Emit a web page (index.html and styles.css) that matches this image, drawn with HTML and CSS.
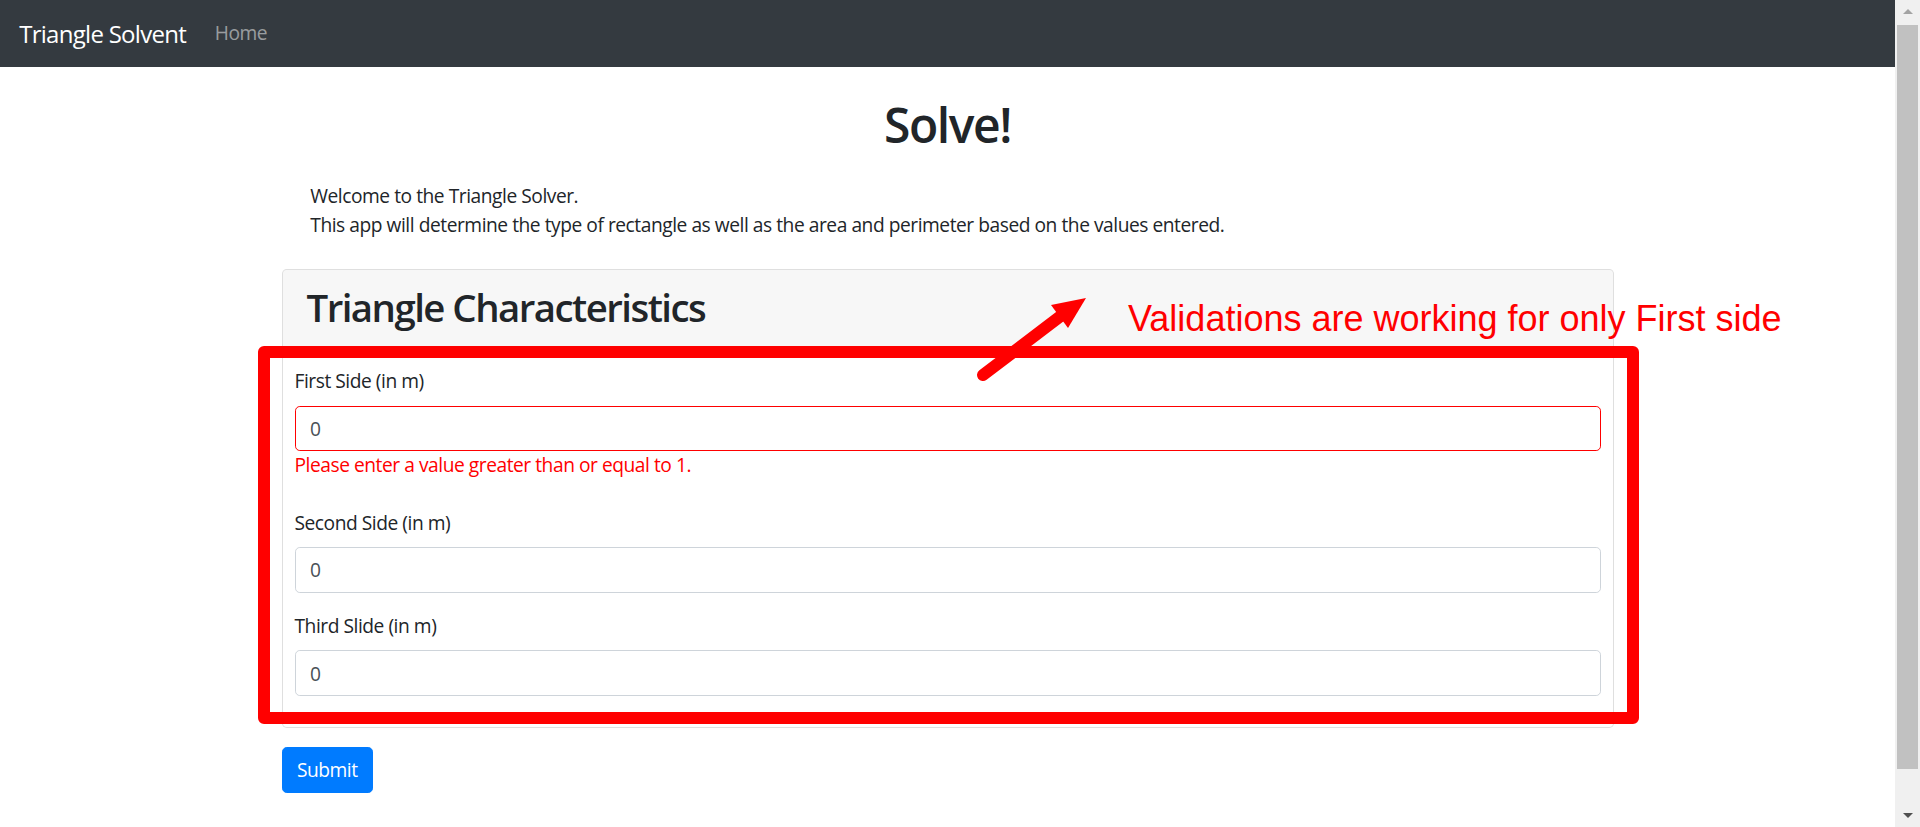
FILE: index.html
```html
<!DOCTYPE html>
<html lang="en">
<head>
<meta charset="utf-8">
<title>Triangle Solvent</title>
<link rel="stylesheet" href="styles.css">
</head>
<body>
<div class="viewport">
  <div class="page">
    <nav class="navbar">
      <a class="brand" href="#">Triangle Solvent</a>
      <a class="nav-link" href="#">Home</a>
    </nav>
    <main class="container">
      <h1 class="title">Solve!</h1>
      <p class="intro">Welcome to the Triangle Solver.<br>This app will determine the type of rectangle as well as the area and perimeter based on the values entered.</p>
      <form class="solver">
        <div class="card">
          <div class="card-header">
            <h2 class="card-title">Triangle Characteristics</h2>
          </div>
          <div class="card-body">
            <div class="form-group">
              <label class="field-label">First Side (in m)</label>
              <input class="form-control invalid" type="text" value="0">
              <div class="error">Please enter a value greater than or equal to 1.</div>
            </div>
            <div class="form-group">
              <label class="field-label">Second Side (in m)</label>
              <input class="form-control" type="text" value="0">
            </div>
            <div class="form-group">
              <label class="field-label">Third Slide (in m)</label>
              <input class="form-control" type="text" value="0">
            </div>
          </div>
        </div>
        <button class="btn-submit" type="button">Submit</button>
      </form>
    </main>

    <svg class="annotation" width="1895" height="827" viewBox="0 0 1895 827">
      <rect x="264" y="352" width="1369" height="366" fill="none" stroke="#ff0000" stroke-width="12" stroke-linejoin="round"/>
      <line x1="983" y1="375" x2="1062" y2="315" stroke="#ff0000" stroke-width="12" stroke-linecap="round"/>
      <polygon points="1086,298 1051,305 1068,328" fill="#ff0000"/>
    </svg>
    <div class="annotation-text">Validations are working for only First side</div>
  </div>

  <div class="scrollbar">
    <div class="sb-btn"><span class="arrow-up"></span></div>
    <div class="sb-track"><div class="sb-thumb"></div></div>
    <div class="sb-btn"><span class="arrow-down"></span></div>
  </div>
</div>
</body>
</html>
```

FILE: styles.css
```css
* {
  box-sizing: border-box;
}

html, body {
  margin: 0;
  padding: 0;
  height: 100%;
}

body {
  font-family: "Open Sans", "Noto Sans", sans-serif;
  font-size: 19.2px;
  line-height: 28.8px;
  color: #212529;
  letter-spacing: -0.024em;
  background: #fff;
}

.viewport {
  display: flex;
  height: 100vh;
  overflow: hidden;
}

.page {
  position: relative;
  flex: 1;
  height: 100%;
  overflow: hidden;
}

/* Navbar */
.navbar {
  display: flex;
  align-items: center;
  height: 67.2px;
  padding: 9.6px 19.2px;
  background: #343a40;
}

.brand {
  font-size: 24px;
  line-height: 36px;
  color: #fff;
  text-decoration: none;
  margin-right: 19.2px;
  letter-spacing: -0.03em;
}

.nav-link {
  padding: 9.6px;
  color: rgba(255, 255, 255, 0.5);
  text-decoration: none;
}

/* Main container */
.container {
  width: 1368px;
  margin: 0 auto;
  padding: 28.8px 18px 0;
}

.title {
  margin: 0;
  font-size: 48px;
  line-height: 57.6px;
  font-weight: 600;
  letter-spacing: -0.03em;
  text-align: center;
}

.intro {
  margin: 28.8px 0 28.8px;
  padding: 0 28.8px;
}

/* Card */
.card {
  border: 1px solid rgba(0, 0, 0, 0.125);
  border-radius: 4.8px;
  background: #fff;
  overflow: hidden;
}

.card-header {
  padding: 14.4px 24px;
  background: rgba(0, 0, 0, 0.03);
  border-bottom: 1px solid rgba(0, 0, 0, 0.125);
}

.card-title {
  margin: 0 0 9.6px;
  font-size: 38.4px;
  line-height: 46.08px;
  font-weight: 600;
  letter-spacing: -0.04em;
}

.card-body {
  padding: 12px;
}

.form-group {
  margin-bottom: 19.2px;
}

.field-label {
  display: block;
  margin-bottom: 9.6px;
}

.form-control {
  display: block;
  width: 100%;
  height: 45.6px;
  padding: 7.2px 14.4px;
  font-family: inherit;
  font-size: 19.2px;
  line-height: 28.8px;
  letter-spacing: -0.024em;
  color: #495057;
  background: #fff;
  border: 1px solid #ced4da;
  border-radius: 4.8px;
  outline: none;
}

.form-control.invalid {
  border-color: #ff0000;
}

.error {
  color: #ff0000;
  padding-bottom: 9.6px;
}

.btn-submit {
  margin-top: 0;
  height: 45.6px;
  padding: 7.2px 14.4px;
  font-family: inherit;
  font-size: 19.2px;
  line-height: 28.8px;
  letter-spacing: -0.024em;
  color: #fff;
  background: #007bff;
  border: 1px solid #007bff;
  border-radius: 4.8px;
}

.solver {
  display: flex;
  flex-direction: column;
  align-items: flex-start;
  gap: 19.2px;
}

.solver .card {
  align-self: stretch;
}

/* Annotation overlay */
.annotation {
  position: absolute;
  left: 0;
  top: 0;
  pointer-events: none;
}

.annotation-text {
  position: absolute;
  left: 1128px;
  top: 301px;
  font-family: "Liberation Sans", Arial, sans-serif;
  font-size: 36px;
  line-height: 36px;
  letter-spacing: 0;
  color: #ff0000;
  white-space: nowrap;
}

/* Scrollbar */
.scrollbar {
  display: flex;
  flex-direction: column;
  width: 25px;
  height: 100%;
  background: #f0f0f0;
}

.sb-btn {
  display: flex;
  align-items: center;
  justify-content: center;
  height: 25px;
}

.sb-track {
  flex: 1;
  padding: 0 2px;
}

.sb-thumb {
  height: 744px;
  background: #c1c1c1;
}

.arrow-up {
  width: 0;
  height: 0;
  border-left: 5.5px solid transparent;
  border-right: 5.5px solid transparent;
  border-bottom: 5.5px solid #a3a3a3;
  margin-top: -2px;
}

.arrow-down {
  width: 0;
  height: 0;
  border-left: 5.5px solid transparent;
  border-right: 5.5px solid transparent;
  border-top: 5.5px solid #505050;
  margin-top: 2px;
}
```
